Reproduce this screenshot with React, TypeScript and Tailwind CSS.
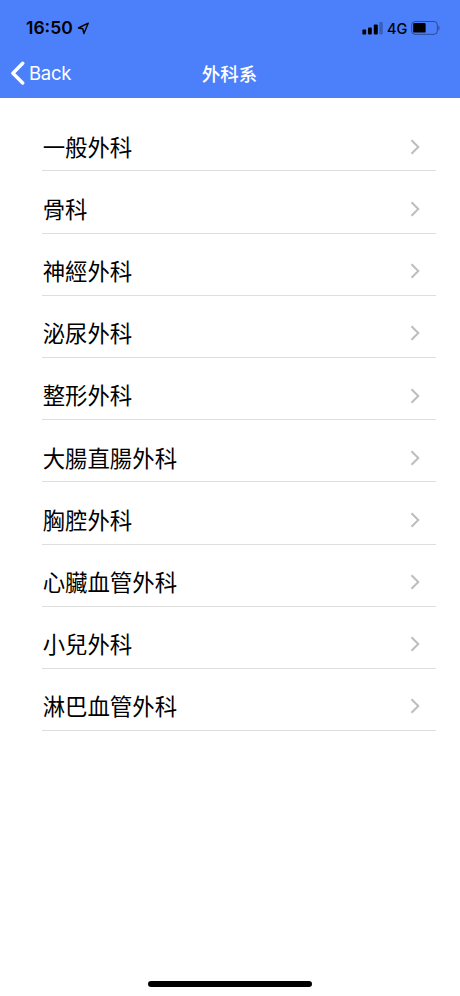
const departments = [
  "一般外科",
  "骨科",
  "神經外科",
  "泌尿外科",
  "整形外科",
  "大腸直腸外科",
  "胸腔外科",
  "心臟血管外科",
  "小兒外科",
  "淋巴血管外科",
];

function StatusBar() {
  return (
    <div className="flex h-[56px] items-center justify-between pl-[26px] pr-[19px] text-black">
      <div className="flex items-center gap-[4px]">
        <span className="text-[17.5px] leading-none font-semibold">16:50</span>
        <svg width="13" height="13" viewBox="0 0 13 13" fill="none" stroke="currentColor" strokeWidth="1.4" strokeLinejoin="round" aria-hidden>
          <path d="M11.2 1.2 L1.4 6 L5.8 6.8 L6.9 11.5 Z" />
        </svg>
      </div>
      <div className="flex items-center">
        <svg width="21" height="13" viewBox="0 0 21 13" fill="currentColor" aria-hidden>
          <rect x="0.4" y="7.5" width="3.8" height="5" rx="1" />
          <rect x="6" y="5.5" width="3.8" height="7" rx="1" />
          <rect x="11.8" y="2.5" width="4" height="10" rx="1" />
          <rect x="17.2" y="0" width="3.6" height="12.5" rx="1" opacity="0.25" />
        </svg>
        <span className="ml-[4px] w-[21px] pt-[2px] text-[14.5px] leading-none font-medium">4G</span>
        <svg className="ml-[3px]" width="30" height="14" viewBox="0 0 30 14" aria-hidden>
          <rect x="0.7" y="0.5" width="25.6" height="12.8" rx="3.2" fill="none" stroke="black" strokeOpacity="0.4" strokeWidth="1" />
          <rect x="2.2" y="2" width="12.4" height="9.6" rx="1.2" fill="black" />
          <path d="M27.4 4.4 Q29.8 7 27.4 9.6 Z" fill="black" fillOpacity="0.4" />
        </svg>
      </div>
    </div>
  );
}

function NavBar() {
  return (
    <div className="grid h-[42px] grid-cols-[1fr_auto_1fr] items-center pr-px pb-[8px] text-white">
      <button type="button" className="flex h-[34px] items-center pl-[10px]">
        <svg width="15" height="24" viewBox="0 0 15 24" fill="none" stroke="currentColor" strokeWidth="3.4" strokeLinecap="round" strokeLinejoin="round" aria-hidden>
          <path d="M12.7 2.2 L2.9 12.2 L12.7 22" />
        </svg>
        <span className="ml-[4px] text-[18.5px] leading-none tracking-[-0.3px]">Back</span>
      </button>
      <h1 className="pt-[3px] text-[18.5px] leading-none font-medium">外科系</h1>
      <span />
    </div>
  );
}

export default function App() {
  return (
    <div className="flex h-[996px] w-[460px] flex-col overflow-hidden bg-white font-['Inter','Noto_Sans_CJK_TC',sans-serif]">
      <header className="h-[98px] shrink-0 bg-[#4c7ffa]">
        <StatusBar />
        <NavBar />
      </header>
      <ul className="mt-[11.2px] mr-[24px] ml-[42px]">
        {departments.map((name) => (
          <li
            key={name}
            className="flex h-[62.2px] items-center justify-between border-b border-[#dedede] pt-[14px] pr-[15px]"
          >
            <span className="pt-[2px] pl-[0.7px] text-[22.4px] leading-none text-black">{name}</span>
            <svg width="11" height="16" viewBox="0 0 11 16" fill="none" stroke="#bdbdbd" strokeWidth="2" aria-hidden>
              <path d="M1.5 1.2 L8.3 8 L1.5 14.8" />
            </svg>
          </li>
        ))}
      </ul>
      <div className="mx-auto mt-auto mb-[9px] h-[6px] w-[164px] shrink-0 rounded-full bg-black" />
    </div>
  );
}
